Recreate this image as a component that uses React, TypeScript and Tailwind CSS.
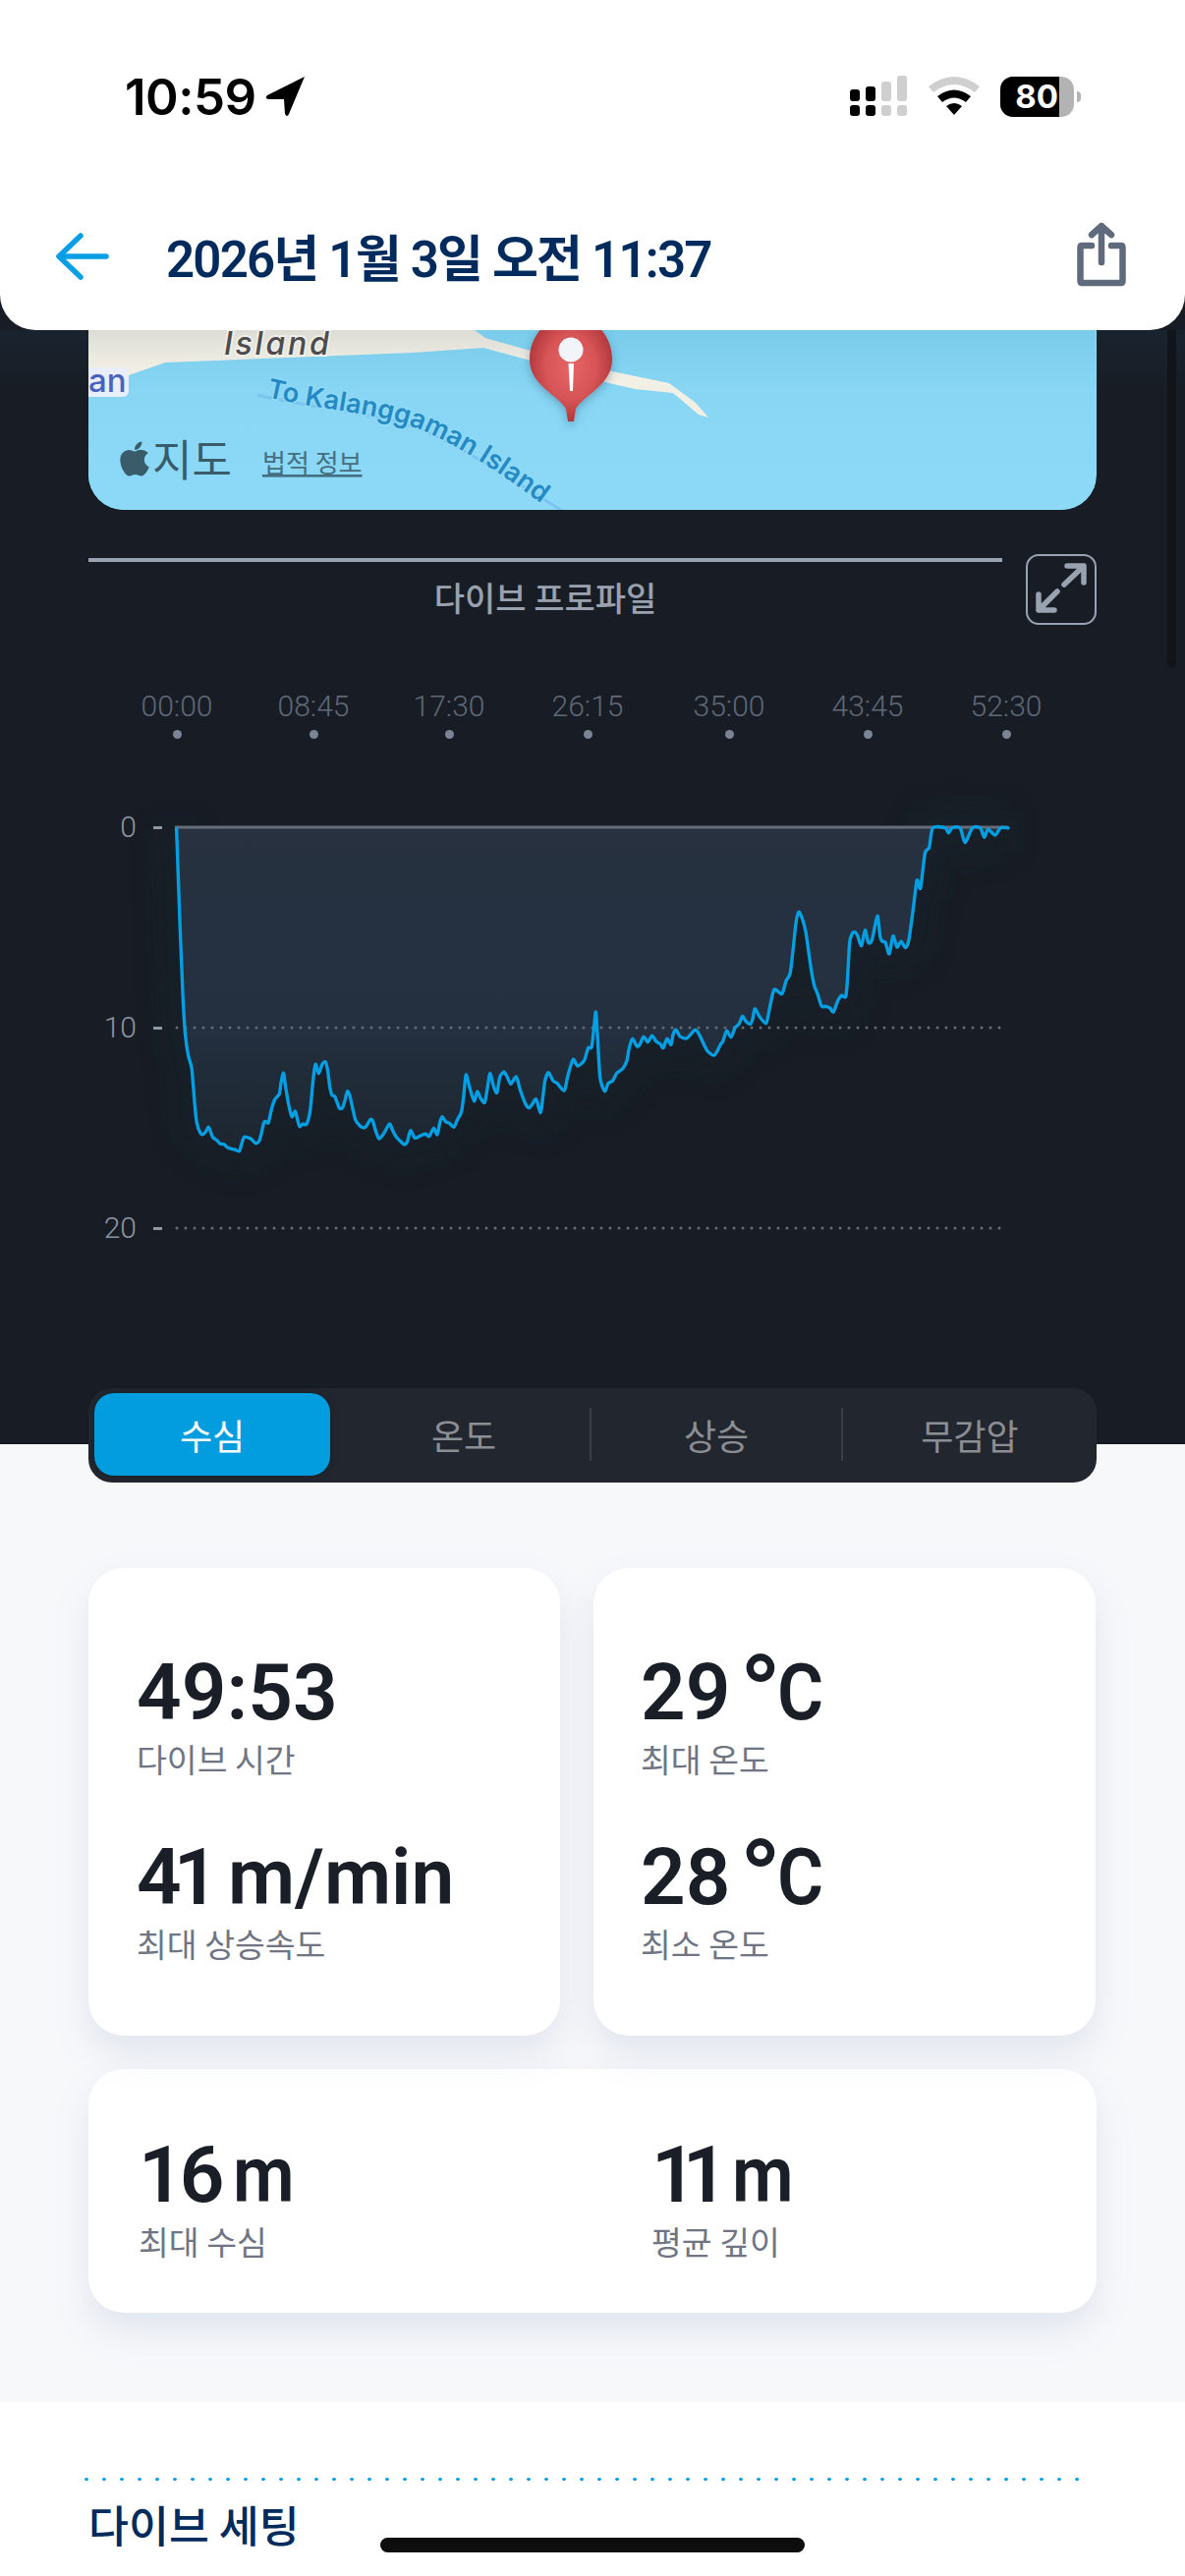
import React from "react";
import { FaApple } from "react-icons/fa";

const KR = '"Noto Sans CJK KR", sans-serif';
const NUM = 'Roboto, "Noto Sans CJK KR", sans-serif';

// traced from the chart, crop coordinates of the left half and right half
const leftTrace: number[][] = [
  [335,130],[340,280],[345,430],[350,560],[354,660],[360,760],[368,820],[378,860],[383,920],[388,985],[393,1030],[402,1058],[410,1064],[418,1056],[426,1042],[432,1055],[438,1072],[450,1082],[460,1093],[470,1094],[482,1105],[500,1110],[514,1115],[520,1095],[528,1072],[540,1074],[550,1080],[560,1091],[570,1085],[576,1065],[584,1028],[590,1025],[597,1028],[605,990],[615,958],[628,940],[633,905],[640,877],[646,920],[655,975],[664,1010],[673,993],[680,1020],[686,1040],[695,1032],[706,1032],[716,990],[724,900],[731,850],[740,878],[750,850],[760,843],[766,870],[772,920],[778,944],[786,948],[792,965],[800,985],[808,982],[815,960],[822,932],[830,950],[838,990],[845,1020],[855,1035],[865,1043],[875,1040],[888,1018],[895,1025],[903,1055],[912,1077],[925,1062],[942,1032],[950,1050],[960,1070],[975,1087],[985,1095],[993,1085],[1002,1052],[1014,1075],[1030,1068],[1045,1063],[1055,1070],[1068,1045],[1078,1065],[1085,1030],[1092,1010],[1102,1025],[1113,1030],[1125,1042],[1135,1020],[1147,995],[1153,950],[1160,882],[1170,920],[1183,962],[1192,933],[1202,955],[1213,967],[1220,930],[1228,878],[1238,915],[1248,937],[1256,890],[1268,873],[1278,890],[1288,910],[1303,888],[1315,930],[1330,972],[1340,983],[1350,970],[1360,957],[1372,998],[1378,960],[1385,900],[1395,875],[1408,900],[1420,908],[1440,930],[1450,885],[1465,835],[1478,855],[1497,838],[1508,800],[1518,797],[1525,735],[1530,690],[1535,770],[1542,890],
];
const rightTrace: number[][] = [
  [155,932],[165,908],[178,900],[190,876],[205,865],[218,840],[225,800],[234,772],[247,795],[255,790],[266,766],[278,782],[290,763],[302,780],[314,788],[322,800],[333,772],[344,790],[350,760],[358,744],[370,765],[390,770],[412,745],[425,760],[447,808],[468,822],[485,790],[492,780],[503,748],[515,767],[527,738],[538,727],[548,703],[557,718],[570,727],[577,710],[583,680],[595,702],[615,725],[625,680],[638,622],[660,635],[672,595],[683,575],[690,520],[700,420],[708,385],[718,405],[728,445],[738,520],[745,570],[753,612],[762,635],[773,672],[785,673],[797,678],[807,690],[820,655],[830,640],[842,643],[847,590],[853,480],[860,452],[868,446],[876,458],[887,488],[897,440],[906,478],[917,470],[932,397],[940,460],[946,475],[955,478],[966,513],[977,458],[988,492],[1000,475],[1012,494],[1022,470],[1035,370],[1045,288],[1055,312],[1068,205],[1080,188],[1090,128],[1125,128],[1135,143],[1145,128],[1168,128],[1182,173],[1203,128],[1225,128],[1237,157],[1247,133],[1268,150],[1283,128],[1305,128],
];

// chart svg starts at x=140, y=820 in the page
const points = [
  ...leftTrace.map(([x, y]) => [60 + x / 2.8 - 140, 800 + y / 3 - 820]),
  ...rightTrace.map(([x, y]) => [560 + x / 2.8 - 140, 800 + y / 3 - 820]),
];

function smoothPath(p: number[][]) {
  let d = `M${p[0][0].toFixed(1)} ${p[0][1].toFixed(1)}`;
  for (let i = 0; i < p.length - 1; i++) {
    const a = p[Math.max(i - 1, 0)];
    const b = p[i];
    const c = p[i + 1];
    const e = p[Math.min(i + 2, p.length - 1)];
    const c1x = b[0] + (c[0] - a[0]) / 8;
    const c1y = b[1] + (c[1] - a[1]) / 8;
    const c2x = c[0] - (e[0] - b[0]) / 8;
    const c2y = c[1] - (e[1] - b[1]) / 8;
    d += `C${c1x.toFixed(1)} ${c1y.toFixed(1)} ${c2x.toFixed(1)} ${c2y.toFixed(1)} ${c[0].toFixed(1)} ${c[1].toFixed(1)}`;
  }
  return d;
}

const linePath = smoothPath(points);
const last = points[points.length - 1];
const areaPath = `${linePath}L${last[0].toFixed(1)} 22L${points[0][0].toFixed(1)} 22Z`;

const ticks = ["00:00", "08:45", "17:30", "26:15", "35:00", "43:45", "52:30"];
const tickX = [180, 319, 457, 598, 742, 883, 1024];

function StatusBar() {
  return (
    <div className="flex h-[42px] items-center justify-between pl-[127px] pr-[106px]">
      <div className="flex items-center gap-[9px]">
        <span className="text-[51px] font-semibold leading-none tracking-[-0.5px] text-black" style={{ fontFamily: "Inter, sans-serif" }}>
          10:59
        </span>
        <svg width="42" height="42" viewBox="0 0 42 42">
          <path d="M40 1 L2 20 Q-1 23 3 24 L19 24 L20 39 Q22 43 24 39 Z" fill="#000" />
        </svg>
      </div>
      <div className="flex items-center">
        <svg width="60" height="42" viewBox="0 0 60 42" className="mr-[20px]">
          <rect x="0" y="14" width="10" height="12" rx="3" fill="#000" />
          <rect x="16" y="11" width="10" height="15" rx="3" fill="#000" />
          <rect x="32" y="6" width="10" height="20" rx="3" fill="#cfcfcf" />
          <rect x="48" y="0" width="10" height="26" rx="3" fill="#cfcfcf" />
          <rect x="0" y="30" width="10" height="11" rx="3" fill="#000" />
          <rect x="16" y="30" width="10" height="11" rx="3" fill="#000" />
          <rect x="32" y="30" width="10" height="11" rx="3" fill="#cfcfcf" />
          <rect x="48" y="30" width="10" height="11" rx="3" fill="#cfcfcf" />
        </svg>
        <svg width="52" height="42" viewBox="0 0 52 42" className="mr-[21px]">
          <path d="M0 11 Q26 -9 52 11 L47 17 Q26 1 5 17 Z" fill="#cfcfcf" />
          <path d="M9 21 Q26 8 43 21 L38 27 Q26 18 14 27 Z" fill="#000" />
          <path d="M18 31 Q26 25 34 31 L26 40 Z" fill="#000" />
        </svg>
        <div className="relative flex h-[41px] w-[75px] items-center overflow-hidden rounded-[13px] bg-[#b3b3b3]">
          <div className="flex h-full w-[60px] items-center justify-end bg-black pr-px">
            <span className="text-[33px] font-bold leading-none text-white" style={{ fontFamily: "Inter, sans-serif" }}>
              80
            </span>
          </div>
        </div>
        <div className="ml-[3px] h-[11px] w-[4px] rounded-r-full bg-[#b3b3b3]" />
      </div>
    </div>
  );
}

function Header() {
  return (
    <header className="relative z-20 h-[336px] rounded-b-[36px] bg-white pt-[77px]">
      <StatusBar />
      <div className="mt-[109px] flex items-center pl-[57px] pr-[60px]">
        <svg width="54" height="48" viewBox="0 0 54 48" fill="none" stroke="#0a9fe4" strokeWidth="5.5" strokeLinecap="round" strokeLinejoin="round">
          <path d="M3 24 H51 M25 3 L3 24 L25 45" />
        </svg>
        <h1 className="ml-[58px] mt-[7px] text-[51px] font-semibold leading-none tracking-[-1.8px] text-[#002b5c]" style={{ fontFamily: NUM }}>
          2026년 1월 3일 오전 11:37
        </h1>
        <svg width="50" height="66" viewBox="0 0 50 66" fill="none" stroke="#5f6b7c" strokeWidth="6.5" strokeLinecap="round" strokeLinejoin="round" className="ml-auto -translate-y-[2px]">
          <path d="M15 24 H5 Q3.500 24 3.500 26 V60 Q3.500 62 5.500 62 H44.500 Q46.500 62 46.500 60 V26 Q46.500 24 45 24 H35" />
          <path d="M25 41 V4 M15 13 L25 4 L35 13" />
        </svg>
      </div>
    </header>
  );
}

function MapCard() {
  return (
    <div className="relative z-10 mx-[90px] h-[183px] overflow-hidden rounded-b-[36px] bg-[#8bd9f7]">
      <svg width="1025" height="183" viewBox="90 336 1025 183">
        <defs>
          <linearGradient id="water" x1="0" y1="0" x2="0" y2="1">
            <stop offset="0" stopColor="#7accea" />
            <stop offset="0.35" stopColor="#88d6f4" />
            <stop offset="1" stopColor="#8cdaf8" />
          </linearGradient>
          <linearGradient id="land" x1="0" y1="0" x2="0" y2="1">
            <stop offset="0" stopColor="#dcdcd5" />
            <stop offset="0.3" stopColor="#ebeae1" />
            <stop offset="0.5" stopColor="#f2efe5" />
          </linearGradient>
          <radialGradient id="pin" cx="0.5" cy="0.48" r="0.55">
            <stop offset="0" stopColor="#e56365" />
            <stop offset="0.55" stopColor="#d85557" />
            <stop offset="1" stopColor="#ac3437" />
          </radialGradient>
          <filter id="pinShadow" x="-30%" y="-30%" width="160%" height="160%">
            <feDropShadow dx="0" dy="3" stdDeviation="5" floodColor="#25506a" floodOpacity="0.4" />
          </filter>
          <path id="route" d="M271 404 C330 418 385 420 430 438 C480 460 520 490 566 523" />
        </defs>
        <rect x="90" y="336" width="1025" height="183" fill="url(#water)" />
        <path
          d="M90 336 H483 L494 344 L540 357 L623 378 L681 390 L708 410 L721 425 L711 422 L685 400 L646 396 L620 390 L540 367 L492 354 L419 359 L168 369 L131 382 L90 398 Z"
          fill="url(#land)"
        />
        <path d="M262 402 C330 418 385 420 430 438 C480 460 530 494 574 521" fill="none" stroke="#7cc4ee" strokeWidth="3" />
        <text x="228" y="361" fontSize="32" fontWeight="500" fontStyle="italic" letterSpacing="2.800" fill="#4a4c50" stroke="#f0eee6" strokeWidth="4" paintOrder="stroke" style={{ fontFamily: "Inter, sans-serif" }}>
          Island
        </text>
        <rect x="80" y="374" width="51" height="30" rx="6" fill="#e8eefa" />
        <text x="90" y="399" fontSize="33" fontWeight="500" fill="#4a62bf" style={{ fontFamily: "Inter, sans-serif" }}>
          an
        </text>
        <text fontSize="27" fontWeight="600" letterSpacing="0.1" fill="#2589c3" stroke="#8fdaf7" strokeWidth="3" paintOrder="stroke" style={{ fontFamily: "Inter, sans-serif" }}>
          <textPath href="#route">To Kalanggaman Island</textPath>
        </text>
        <g filter="url(#pinShadow)">
          <path d="M581 322 C608 322 623 344 623 366 C623 392 594 402 586 416 L584 429 H578 L576 416 C568 402 539 392 539 366 C539 344 554 322 581 322 Z" fill="url(#pin)" />
        </g>
        <circle cx="581" cy="356" r="12.500" fill="#f1f4f8" />
        <path d="M578.500 370 H584 L583 398 H580 Z" fill="#fff" />
        <text x="155" y="485" fontSize="44" fill="#3a5b69" style={{ fontFamily: KR }}>
          지도
        </text>
        <text x="267" y="481" fontSize="26" fill="#456f80" textDecoration="underline" style={{ fontFamily: KR }}>
          법적 정보
        </text>
        <g transform="translate(117 447)">
          <FaApple size={40} color="#3a5b69" />
        </g>
      </svg>
    </div>
  );
}

function ProfileChart() {
  return (
    <div className="relative h-[593px]">
      <svg width="900" height="460" viewBox="0 0 900 460" className="absolute left-[140px] top-0 overflow-visible">
        <defs>
          <linearGradient id="area" x1="0" y1="0" x2="0" y2="1">
            <stop offset="0" stopColor="#273140" />
            <stop offset="0.6" stopColor="#243040" />
            <stop offset="1" stopColor="#1c2630" />
          </linearGradient>
          <filter id="soft" x="-10%" y="-20%" width="120%" height="140%">
            <feGaussianBlur stdDeviation="14" />
          </filter>
        </defs>
        <path d={linePath} fill="none" stroke="#18222b" strokeWidth="36" opacity="0.5" filter="url(#soft)" />
        <path d={areaPath} fill="url(#area)" />
        <line x1="40" y1="226" x2="878" y2="226" stroke="#646b76" strokeWidth="3" strokeDasharray="0 9" strokeLinecap="round" />
        <line x1="40" y1="430" x2="878" y2="430" stroke="#646b76" strokeWidth="3" strokeDasharray="0 9" strokeLinecap="round" />
        <line x1="38" y1="22" x2="886" y2="22" stroke="#666d78" strokeWidth="3" />
        <path d={linePath} fill="none" stroke="#049fe3" strokeWidth="3.400" strokeLinejoin="round" strokeLinecap="round" />
      </svg>
      {[
        { label: "0", cls: "top-[5px]" },
        { label: "10", cls: "top-[209px]" },
        { label: "20", cls: "top-[413px]" },
      ].map((row) => (
        <div key={row.label} className={`absolute left-[90px] flex h-[34px] w-[75px] items-center ${row.cls}`}>
          <span className="w-[49px] text-right text-[30px] font-light leading-none text-[#8d95a1]" style={{ fontFamily: NUM }}>
            {row.label}
          </span>
          <span className="ml-[17px] h-[3px] w-[9px] bg-[#8f97a3]" />
        </div>
      ))}
    </div>
  );
}

function Tabs() {
  return (
    <div className="relative z-10 mx-[90px] flex h-[96px] items-center rounded-[24px] bg-[#22272f] pb-[2px] pl-[6px] text-[36px] text-[#8b8e93]" style={{ fontFamily: KR }}>
      <div className="flex h-[84px] w-[240px] items-center justify-center rounded-[20px] bg-[#019ddf] text-white shadow-[0_0_6px_rgba(20,24,30,0.5)]">수심</div>
      <div className="flex h-[84px] w-[264px] items-center justify-center pl-[8px]">온도</div>
      <div className="h-[54px] w-[2px] bg-[#3a3f47]" />
      <div className="flex h-[84px] w-[254px] items-center justify-center">상승</div>
      <div className="h-[54px] w-[2px] bg-[#3a3f47]" />
      <div className="flex h-[84px] flex-1 items-center justify-center">무감압</div>
    </div>
  );
}

function Stat({ children, label }: { children: React.ReactNode; label: string }) {
  return (
    <div>
      <div className="h-[74px] whitespace-nowrap text-[80px] font-semibold leading-[74px] text-[#1a1e26]" style={{ fontFamily: NUM }}>
        {children}
      </div>
      <div className="mt-[10px] h-[40px] text-[33.5px] leading-[40px] text-[#6f7582]" style={{ fontFamily: KR }}>
        {label}
      </div>
    </div>
  );
}

function Celsius({ value }: { value: string }) {
  return (
    <>
      {value}
      <span className="relative top-[13px] ml-[9px] text-[112px] font-medium leading-[0]">°</span>
      <span className="-ml-[4px] inline-block origin-left scale-x-90">C</span>
    </>
  );
}

const cardClass = "rounded-[36px] bg-white shadow-[0_18px_36px_rgba(110,135,180,0.16)]";

export default function App() {
  return (
    <div className="relative h-[2622px] w-[1206px] overflow-hidden bg-white">
      <section className="relative h-[1470px] bg-[#181d25]">
        <Header />
        <div className="absolute left-0 top-[336px] h-[60px] w-full bg-gradient-to-b from-[#19232e] to-transparent" />
        <div className="absolute left-[1188px] top-[336px] h-[344px] w-[9px] rounded-b-full bg-[#11141a]" />
        <MapCard />
        <div className="relative mt-[49px] flex h-[72px] items-start pl-[90px]">
          <div className="w-[930px]">
            <div className="h-[4px] bg-[#98a2b0]" />
            <div className="mt-[16px] text-center text-[34px] font-medium leading-[40px] text-[#98a1ad]" style={{ fontFamily: KR }}>
              다이브 프로파일
            </div>
          </div>
          <button className="ml-[24px] -mt-[4px] flex h-[72px] w-[72px] items-center justify-center rounded-[13px] border-2 border-[#98a2b0]">
            <svg width="62" height="64" viewBox="0 0 62 64" fill="none" stroke="#98a2b0" strokeWidth="5.500" strokeLinecap="round" strokeLinejoin="round">
              <path d="M10 52 L29 33 M10 36 V52 H26 M36 26 L56 7 M39 7 H56 V24" transform="translate(-2 1)" />
            </svg>
          </button>
        </div>
        <div className="relative mt-[64px] h-[48px]" style={{ fontFamily: NUM }}>
          {ticks.map((t, i) => (
            <div key={t} className="absolute top-0 flex w-[90px] -translate-x-1/2 flex-col items-center" style={{ left: tickX[i] }}>
              <span className="text-[30px] font-light leading-[30px] text-[#5f6875]">{t}</span>
              <span className="mt-[9px] h-[9px] w-[9px] rounded-full bg-[#7a8494]" />
            </div>
          ))}
        </div>
        <div className="mt-[68px]">
          <ProfileChart />
        </div>
        <Tabs />
      </section>

      <section className="h-[975px] bg-[#f7f8fa] px-[90px] pt-[126px]">
        <div className="flex gap-[34px]">
          <div className={`${cardClass} h-[476px] w-[480px] pl-[49px] pt-[90px]`}>
            <Stat label="다이브 시간">49:53</Stat>
            <div className="mt-[64px]">
              <Stat label="최대 상승속도">
                <span className="tracking-[-8px]">41</span>
                <span className="ml-[18px] inline-block origin-left scale-x-[0.98]">m/min</span>
              </Stat>
            </div>
          </div>
          <div className={`${cardClass} h-[476px] w-[511px] pl-[48px] pt-[90px]`}>
            <Stat label="최대 온도">
              <Celsius value="29" />
            </Stat>
            <div className="mt-[64px]">
              <Stat label="최소 온도">
                <Celsius value="28" />
              </Stat>
            </div>
          </div>
        </div>
        <div className={`${cardClass} mt-[34px] flex h-[248px] pl-[51px] pt-[71px]`}>
          <div className="w-[522px]">
            <Stat label="최대 수심">
              <span className="tracking-[-4px]">16</span>
              <span className="ml-[13px] inline-block origin-left scale-x-90">m</span>
            </Stat>
          </div>
          <Stat label="평균 깊이">
            <span className="tracking-[-14px]">11</span>
            <span className="ml-[19px] inline-block origin-left scale-x-90">m</span>
          </Stat>
        </div>
      </section>

      <div className="absolute left-[79px] top-[2522px] h-[3px] w-[1026px] bg-[radial-gradient(circle,#0aa0e6_1.5px,transparent_2px)] bg-[length:18px_3px]" />
      <div className="absolute left-[90px] top-[2539px] text-[44.5px] font-medium leading-[60px] text-[#002b5c]" style={{ fontFamily: KR }}>
        다이브 세팅
      </div>
      <div className="absolute left-[387px] top-[2583px] h-[15px] w-[432px] rounded-full bg-[#0d0d0d]" />
    </div>
  );
}
